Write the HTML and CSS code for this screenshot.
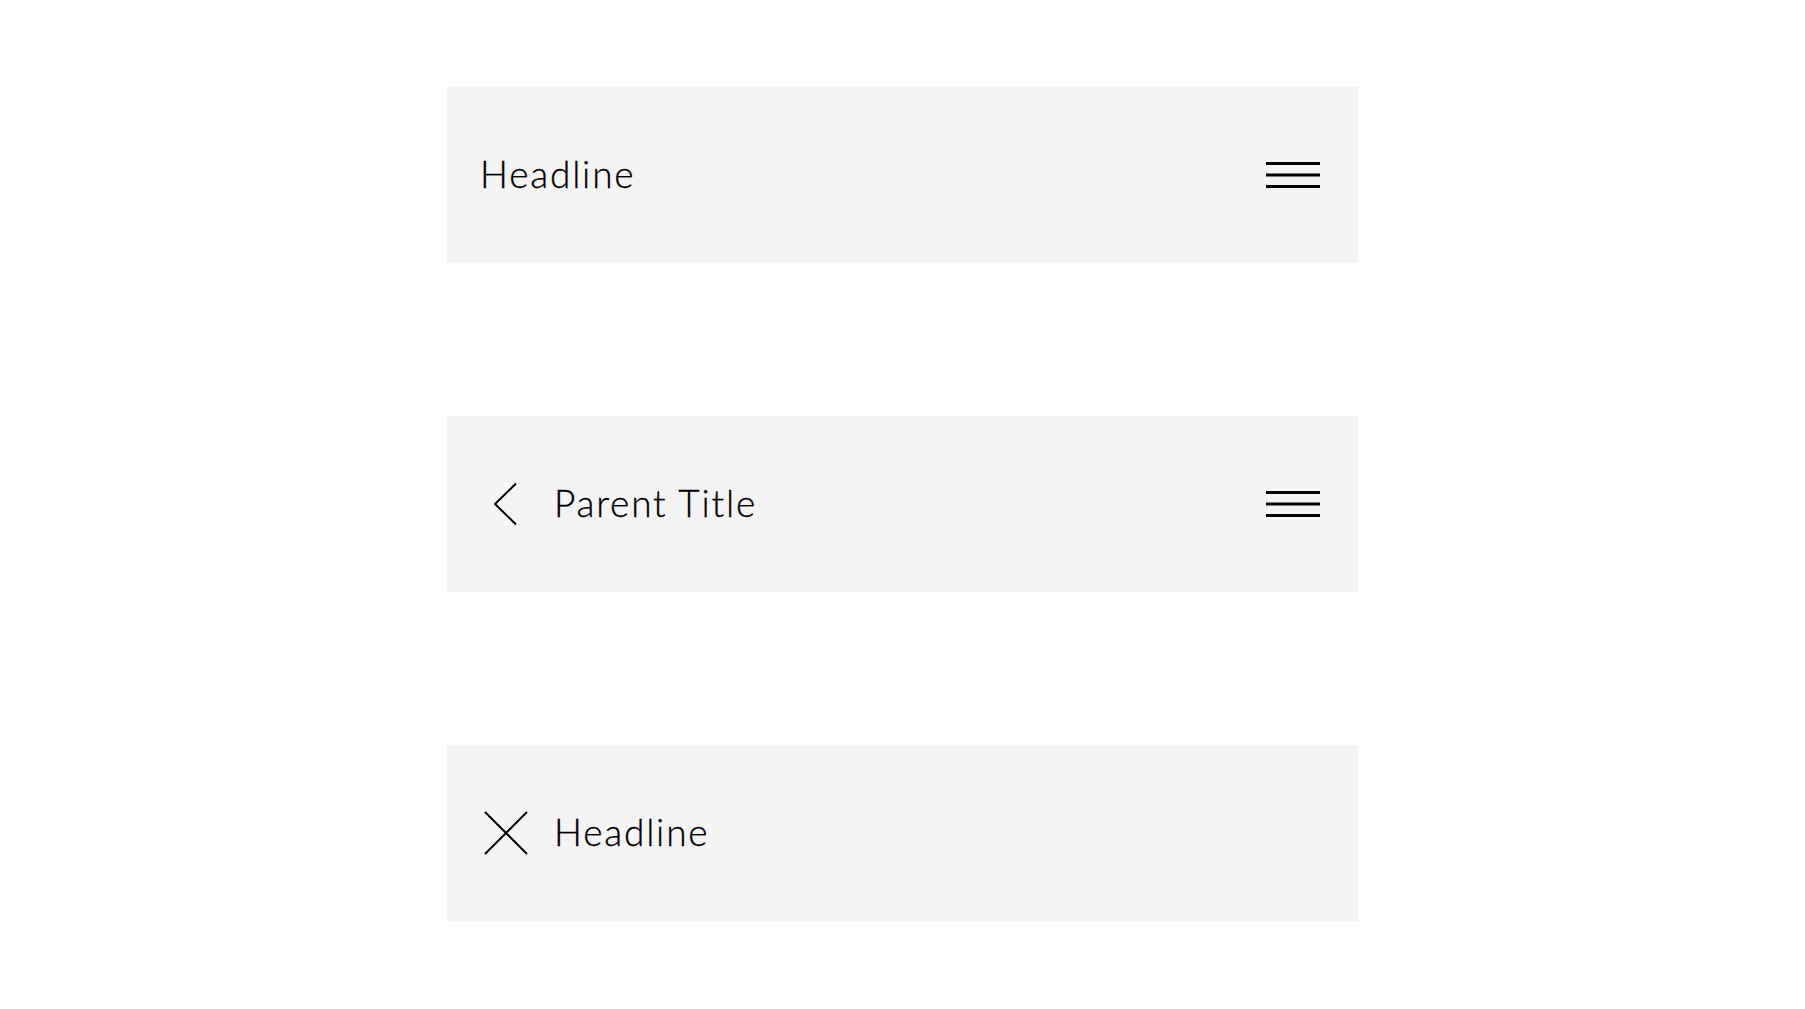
FILE: index.html
```html
<!DOCTYPE html>
<html lang="en">
<head>
<meta charset="utf-8">
<title>Headers</title>
<link rel="stylesheet" href="styles.css">
</head>
<body>
<main class="stack">
  <header class="bar">
    <h1 class="title">Headline</h1>
    <span class="menu" aria-label="Menu">
      <svg width="54" height="26" viewBox="0 0 54 26"><path d="M0 1.5H54M0 13H54M0 24.5H54" stroke="#000" stroke-width="3" fill="none"/></svg>
    </span>
  </header>
  <header class="bar">
    <span class="icon" aria-label="Back">
      <svg width="52" height="52" viewBox="0 0 52 52"><path d="M36 5.5L15 26L36 46.5" stroke="#000" stroke-width="2" fill="none"/></svg>
    </span>
    <h1 class="title">Parent Title</h1>
    <span class="menu" aria-label="Menu">
      <svg width="54" height="26" viewBox="0 0 54 26"><path d="M0 1.5H54M0 13H54M0 24.5H54" stroke="#000" stroke-width="3" fill="none"/></svg>
    </span>
  </header>
  <header class="bar">
    <span class="icon" aria-label="Close">
      <svg width="52" height="52" viewBox="0 0 52 52"><path d="M5 5L47 47M47 5L5 47" stroke="#000" stroke-width="2" fill="none"/></svg>
    </span>
    <h1 class="title">Headline</h1>
  </header>
</main>
</body>
</html>
```

FILE: styles.css
```css
html, body {
  margin: 0;
  padding: 0;
  background: #ffffff;
}
body {
  font-family: "Lato", "Noto Sans", sans-serif;
  color: #000;
}
.stack {
  display: flex;
  flex-direction: column;
  align-items: center;
  gap: 153px;
  padding-top: 87px;
}
.bar {
  width: 911px;
  height: 176px;
  box-sizing: border-box;
  background: #f4f4f4;
  display: flex;
  align-items: center;
  padding: 0 38px 0 33px;
}
.icon {
  width: 52px;
  height: 52px;
  display: flex;
  margin-right: 22px;
  flex: none;
}
.title {
  margin: 0 0 3px;
  font-size: 37px;
  font-weight: 300;
  letter-spacing: 1.8px;
  line-height: 1;
  flex: 1;
  -webkit-text-stroke: 0.3px #000;
}
.menu {
  display: flex;
  flex: none;
}
```
